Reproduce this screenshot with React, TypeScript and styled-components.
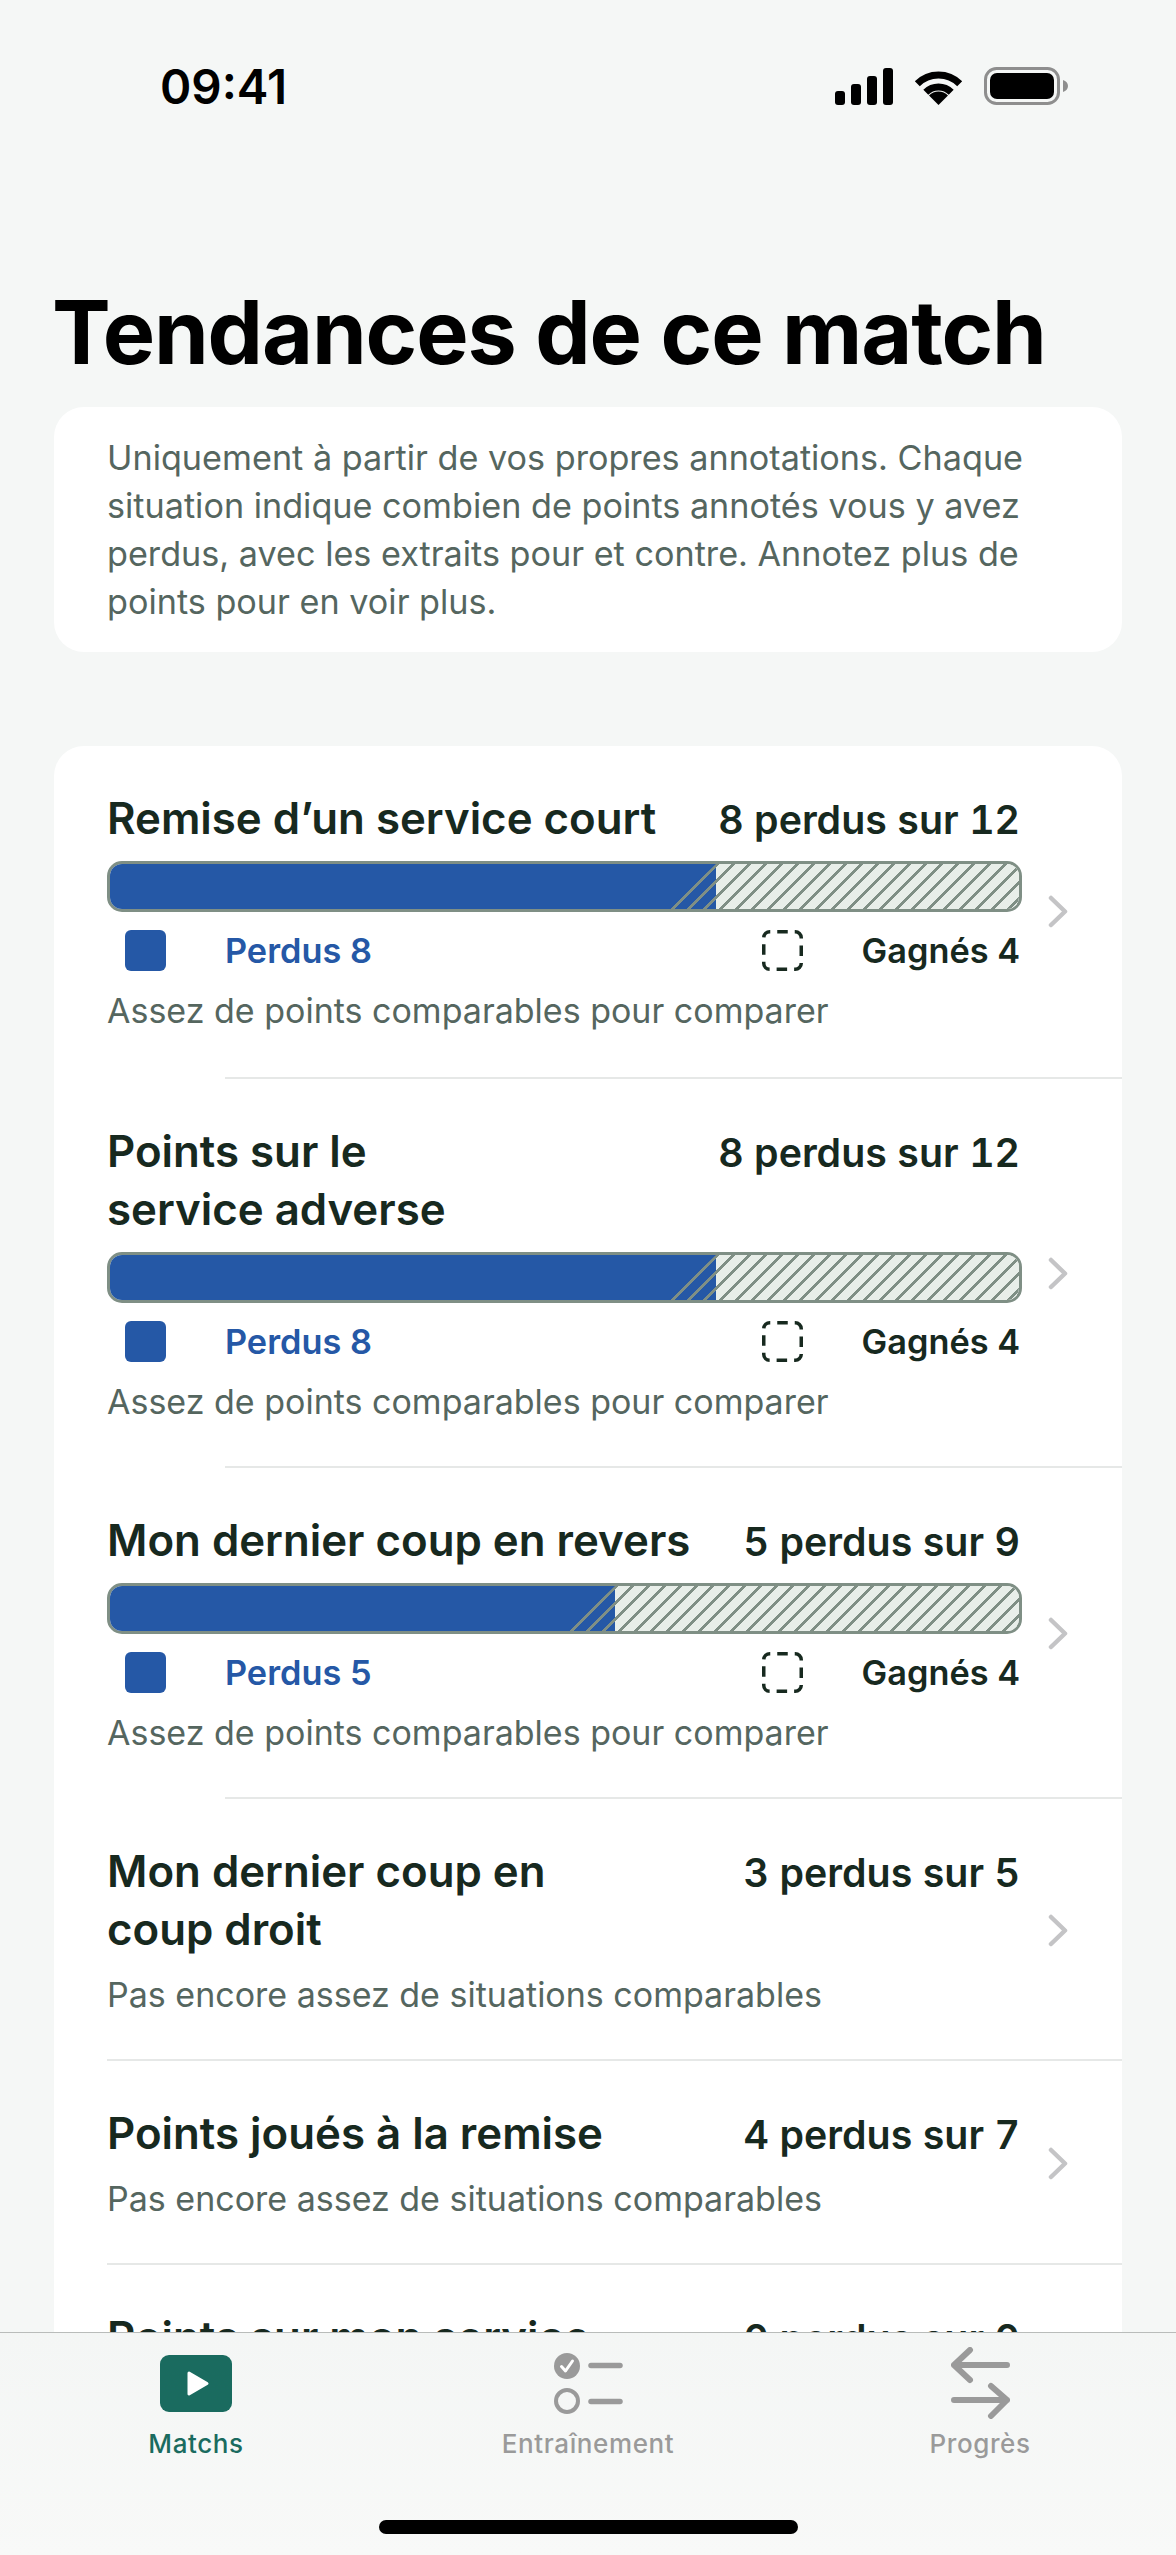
import React from "react";
import styled, { createGlobalStyle } from "styled-components";

const GlobalStyle = createGlobalStyle`
  html, body {
    margin: 0;
    padding: 0;
    background: #f5f7f6;
  }
  * {
    box-sizing: border-box;
  }
`;

const Page = styled.div`
  position: relative;
  width: 1176px;
  height: 2555px;
  overflow: hidden;
  background: #f5f7f6;
  font-family: Inter, "Noto Sans", sans-serif;
  color: #17291f;
`;

const StatusBar = styled.div`
  display: flex;
  justify-content: space-between;
  align-items: center;
  height: 172px;
  padding: 0 107px 0 160px;
`;

const Time = styled.span`
  font-size: 47.5px;
  font-weight: 600;
  color: #000;
`;

const StatusIcons = styled.div`
  display: flex;
  align-items: center;
  gap: 20px;
`;

const Content = styled.div`
  padding: 110px 54px 0;
`;

const Title = styled.h1`
  margin: 0 0 25px -2px;
  font-size: 88px;
  line-height: 100px;
  font-weight: 700;
  color: #000;
  letter-spacing: -1.15px;
`;

const IntroCard = styled.div`
  background: #fff;
  border-radius: 30px;
  padding: 27px 53px 26px;
  margin-bottom: 94px;
  font-size: 34.2px;
  line-height: 48px;
  color: #55665f;
`;

const ListCard = styled.div`
  background: #fff;
  border-radius: 30px 30px 0 0;
`;

const Row = styled.div`
  display: flex;
  align-items: center;
  padding: 44px 54px 42px 53px;

  &:first-child {
    padding-bottom: 44px;
  }
`;

const RowMain = styled.div`
  flex: none;
  width: 915px;
`;

const RowHead = styled.div`
  display: flex;
  justify-content: space-between;
  gap: 24px;
  padding-right: 2px;
`;

const RowTitle = styled.div`
  font-size: 43.8px;
  line-height: 58px;
  font-weight: 600;
`;

const RowCount = styled.div`
  font-size: 39.3px;
  line-height: 60px;
  height: 58px;
  font-weight: 600;
  font-variant-numeric: tabular-nums;
  white-space: nowrap;
`;

const Track = styled.div`
  display: flex;
  height: 51px;
  margin-top: 13px;
  border: 3px solid #7f8f85;
  border-radius: 15px;
  overflow: hidden;
`;

const LostPart = styled.div<{ $count: number }>`
  flex: ${(p) => p.$count} 1 0;
  background: #2558a6;
`;

const WonPart = styled.div<{ $count: number }>`
  position: relative;
  flex: ${(p) => p.$count} 1 0;
  background: #e8eee9;
`;

const Hatch = styled.div`
  position: absolute;
  top: 0;
  bottom: 0;
  right: 0;
  left: -48px;
  clip-path: polygon(48px 0, 100% 0, 100% 100%, 0 100%);
  background: repeating-linear-gradient(
    135deg,
    #7f8f85 0,
    #7f8f85 2.3px,
    transparent 2.8px,
    transparent 11.31px
  );
`;

const Legend = styled.div`
  display: flex;
  align-items: center;
  height: 41px;
  margin-top: 18px;
  padding: 0 2px 0 18px;
`;

const Swatch = styled.span`
  width: 41px;
  height: 41px;
  border-radius: 6px;
  background: #2558a6;
`;

const LegendLabel = styled.span<{ $won?: boolean }>`
  font-size: 34.3px;
  font-weight: 600;
  color: ${(p) => (p.$won ? "#17291f" : "#2558a6")};
  margin-left: ${(p) => (p.$won ? "0" : "59px")};
`;

const WonGroup = styled.div`
  display: flex;
  align-items: center;
  margin-left: auto;
  gap: 59px;
`;

const Note = styled.div<{ $tight?: boolean }>`
  margin-top: ${(p) => (p.$tight ? "14px" : "18px")};
  font-size: 34px;
  line-height: 44px;
  color: #55665f;
`;

const Chevron = styled.svg`
  flex: none;
  margin-left: 26px;
  width: 20px;
  height: 33px;
`;

const Divider = styled.div<{ $inset: number }>`
  height: 2px;
  margin-left: ${(p) => p.$inset}px;
  background: #e6e8e7;
`;

const TabBar = styled.nav`
  position: absolute;
  left: 0;
  right: 0;
  bottom: 0;
  height: 223px;
  padding-top: 14px;
  display: grid;
  grid-template-columns: repeat(3, 1fr);
  align-items: start;
  border-top: 1px solid #b9bcba;
  background: linear-gradient(#f4f6f5, #f8f9f8);
`;

const Tab = styled.div`
  display: flex;
  flex-direction: column;
  align-items: center;
`;

const TabIcon = styled.div`
  height: 72px;
  display: flex;
  align-items: center;
`;

const TabLabel = styled.span<{ $active?: boolean }>`
  margin-top: 7px;
  font-size: 26px;
  line-height: 36px;
  letter-spacing: 0.6px;
  font-weight: 500;
  color: ${(p) => (p.$active ? "#1a6b5f" : "#9a9a9a")};
`;

const HomeIndicator = styled.div`
  position: absolute;
  left: 379px;
  bottom: 21px;
  width: 419px;
  height: 14px;
  border-radius: 7px;
  background: #000;
`;

interface Trend {
  title: string;
  count: string;
  note: string;
  lost?: number;
  won?: number;
  inset: number;
}

const ENOUGH = "Assez de points comparables pour comparer";
const NOT_ENOUGH = "Pas encore assez de situations comparables";

const trends: Trend[] = [
  { title: "Remise d’un service court", count: "8 perdus sur 12", note: ENOUGH, lost: 8, won: 4, inset: 171 },
  { title: "Points sur le service\u00a0adverse", count: "8 perdus sur 12", note: ENOUGH, lost: 8, won: 4, inset: 171 },
  { title: "Mon dernier coup en revers", count: "5 perdus sur 9", note: ENOUGH, lost: 5, won: 4, inset: 171 },
  { title: "Mon dernier coup en coup\u00a0droit", count: "3 perdus sur 5", note: NOT_ENOUGH, inset: 53 },
  { title: "Points joués à la remise", count: "4 perdus sur 7", note: NOT_ENOUGH, inset: 53 },
  { title: "Points sur mon service", count: "0 perdus sur 0", note: NOT_ENOUGH, inset: 53 },
];

function SignalIcon() {
  return (
    <svg width="58" height="37" viewBox="0 0 58 37" fill="#000">
      <rect x="0" y="23" width="10" height="14" rx="3" />
      <rect x="16" y="16" width="10" height="21" rx="3" />
      <rect x="32" y="8" width="10" height="29" rx="3" />
      <rect x="48" y="0" width="10" height="37" rx="3" />
    </svg>
  );
}

function WifiIcon() {
  return (
    <svg width="51" height="37" viewBox="0 0 51 37" fill="none" stroke="#000" strokeWidth="7">
      <path d="M4.3 15.8A30 30 0 0 1 46.7 15.8" />
      <path d="M12.8 24.3A18 18 0 0 1 38.2 24.3" />
      <path d="M25.5 37L16 27.5A13.4 13.4 0 0 1 35 27.5Z" fill="#000" stroke="none" />
    </svg>
  );
}

function BatteryIcon() {
  return (
    <svg width="85" height="38" viewBox="0 0 85 38">
      <rect x="1.500" y="1.500" width="73" height="35" rx="11" fill="none" stroke="#8e8e8e" strokeWidth="3" />
      <rect x="6" y="6" width="64" height="26" rx="7" fill="#000" />
      <path d="M79 13C82 14 84 16 84 19C84 22 82 24 79 25Z" fill="#8e8e8e" />
    </svg>
  );
}

function PlayIcon() {
  return (
    <svg width="72" height="57" viewBox="0 0 72 57">
      <rect width="72" height="57" rx="9" fill="#1a6b5f" />
      <path d="M29 18L47 28.500L29 39Z" fill="#fff" stroke="#fff" strokeWidth="3" strokeLinejoin="round" />
    </svg>
  );
}

function ChecklistIcon() {
  return (
    <svg width="69" height="61" viewBox="0 0 69 61" fill="none" stroke="#9a9a9a" strokeLinecap="round">
      <circle cx="13" cy="13" r="13" fill="#9a9a9a" stroke="none" />
      <path d="M7.500 13.500L11.500 18L18.500 8" stroke="#fff" strokeWidth="3" strokeLinejoin="round" />
      <path d="M37 12.500H66" strokeWidth="5.500" />
      <circle cx="13" cy="48" r="11" strokeWidth="4" />
      <path d="M37 48.500H66" strokeWidth="5.500" />
    </svg>
  );
}

function SwapIcon() {
  return (
    <svg width="59" height="72" viewBox="0 0 59 72" fill="none" stroke="#9a9a9a" strokeWidth="6" strokeLinecap="round" strokeLinejoin="round">
      <path d="M56 18H3M19 3L3 18L19 33" />
      <path d="M3 53H56M40 39L56 53L40 69" />
    </svg>
  );
}

function DashedSwatch() {
  return (
    <svg width="41" height="41" viewBox="0 0 41 41" fill="none">
      <rect x="1.750" y="1.750" width="37.500" height="37.500" rx="6" stroke="#17291f" strokeWidth="3.500" strokeDasharray="10.500 7" strokeDashoffset="-7.500" />
    </svg>
  );
}

export default function App() {
  return (
    <Page>
      <GlobalStyle />
      <StatusBar>
        <Time>09:41</Time>
        <StatusIcons>
          <SignalIcon />
          <WifiIcon />
          <BatteryIcon />
        </StatusIcons>
      </StatusBar>
      <Content>
        <Title>Tendances de ce match</Title>
        <IntroCard>
          Uniquement à partir de vos propres annotations. Chaque situation indique combien de points annotés vous y avez
          perdus, avec les extraits pour et contre. Annotez plus de points pour en voir plus.
        </IntroCard>
        <ListCard>
          {trends.map((trend) => (
            <React.Fragment key={trend.title}>
              <Row>
                <RowMain>
                  <RowHead>
                    <RowTitle>{trend.title}</RowTitle>
                    <RowCount>{trend.count}</RowCount>
                  </RowHead>
                  {trend.lost ? (
                    <>
                      <Track>
                        <LostPart $count={trend.lost} />
                        <WonPart $count={trend.won ?? 0}>
                          <Hatch />
                        </WonPart>
                      </Track>
                      <Legend>
                        <Swatch />
                        <LegendLabel>Perdus {trend.lost}</LegendLabel>
                        <WonGroup>
                          <DashedSwatch />
                          <LegendLabel $won>Gagnés {trend.won}</LegendLabel>
                        </WonGroup>
                      </Legend>
                    </>
                  ) : null}
                  <Note $tight={!trend.lost}>{trend.note}</Note>
                </RowMain>
                <Chevron viewBox="0 0 20 33" fill="none" stroke="#c4c4c6" strokeWidth="4.500" strokeLinecap="round" strokeLinejoin="round">
                  <path d="M3 3L17 16.500L3 30" />
                </Chevron>
              </Row>
              <Divider $inset={trend.inset} />
            </React.Fragment>
          ))}
        </ListCard>
      </Content>
      <TabBar>
        <Tab>
          <TabIcon>
            <PlayIcon />
          </TabIcon>
          <TabLabel $active>Matchs</TabLabel>
        </Tab>
        <Tab>
          <TabIcon>
            <ChecklistIcon />
          </TabIcon>
          <TabLabel>Entraînement</TabLabel>
        </Tab>
        <Tab>
          <TabIcon>
            <SwapIcon />
          </TabIcon>
          <TabLabel>Progrès</TabLabel>
        </Tab>
        <HomeIndicator />
      </TabBar>
    </Page>
  );
}
